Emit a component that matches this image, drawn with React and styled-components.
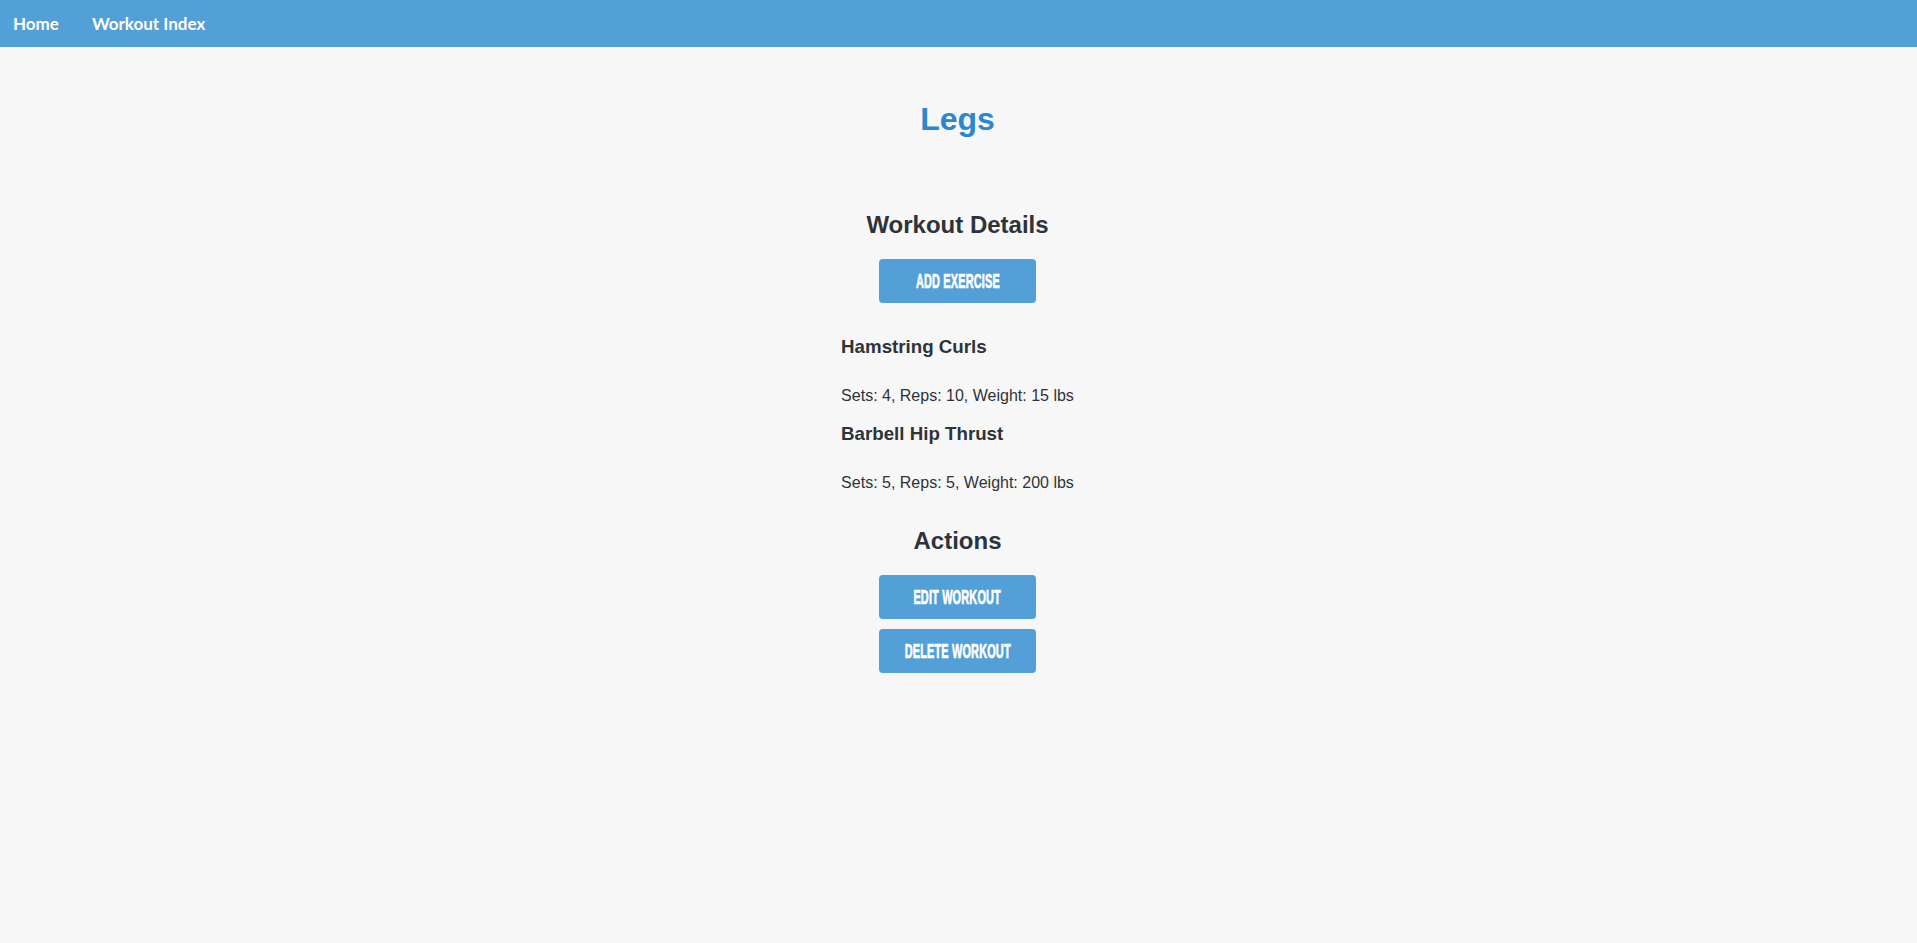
import React from 'react';
import styled, { createGlobalStyle } from 'styled-components';

const GlobalStyle = createGlobalStyle`
  html, body {
    margin: 0;
    padding: 0;
    background: #f7f7f7;
    font-family: "Liberation Sans", Arial, Helvetica, sans-serif;
    color: #2d3339;
  }
`;

const Page = styled.div`
  min-height: 100vh;
  background: #f7f7f7;
`;

const NavBar = styled.nav`
  height: 47px;
  background: #539fd7;
  display: flex;
  align-items: center;
  gap: 33px;
  padding-left: 13px;
`;

const NavLink = styled.a`
  font-family: Lato, "Liberation Sans", sans-serif;
  font-weight: 700;
  font-size: 17px;
  color: #ffffff;
  text-decoration: none;
  cursor: pointer;
`;

const Main = styled.main`
  display: flex;
  flex-direction: column;
  align-items: center;
  padding-right: 2px;
`;

const Title = styled.h1`
  margin: 54px 0 0;
  font-size: 32px;
  line-height: 36px;
  font-weight: 700;
  color: #2a87d1;
`;

const SectionTitle = styled.h2`
  margin: ${p => p.$top}px 0 0;
  font-size: 24px;
  line-height: 28px;
  font-weight: 700;
  color: #2d3339;
`;

const Button = styled.button`
  margin-top: ${p => p.$top}px;
  width: 157px;
  height: 44px;
  border: none;
  border-radius: 4px;
  background: #539fd7;
  color: #ffffff;
  display: flex;
  align-items: center;
  justify-content: center;
  padding: 0;
  cursor: pointer;
`;

const ButtonLabel = styled.span`
  display: inline-block;
  font-family: "Liberation Sans", Arial, sans-serif;
  font-weight: 700;
  font-size: 19.5px;
  line-height: 20px;
  letter-spacing: 0.3px;
  white-space: nowrap;
  transform: scaleX(0.56);
  -webkit-text-stroke: 0.7px #ffffff;
`;

const ExerciseList = styled.div`
  width: fit-content;
  margin-top: 33px;
`;

const ExerciseName = styled.h3`
  margin: 0 0 29px;
  font-size: 18.72px;
  line-height: 22px;
  font-weight: 700;
`;

const ExerciseInfo = styled.p`
  margin: 0 0 18px;
  font-size: 16px;
  line-height: 18px;
  white-space: nowrap;

  &:last-child {
    margin-bottom: 0;
  }
`;

const exercises = [
  { name: 'Hamstring Curls', sets: 4, reps: 10, weight: 15 },
  { name: 'Barbell Hip Thrust', sets: 5, reps: 5, weight: 200 },
];

const App = () => {
  return (
    <>
      <GlobalStyle />
      <Page>
        <NavBar>
          <NavLink>Home</NavLink>
          <NavLink>Workout Index</NavLink>
        </NavBar>
        <Main>
          <Title>Legs</Title>
          <SectionTitle $top={74}>Workout Details</SectionTitle>
          <Button $top={20}><ButtonLabel>ADD EXERCISE</ButtonLabel></Button>
          <ExerciseList>
            {exercises.map(ex => (
              <React.Fragment key={ex.name}>
                <ExerciseName>{ex.name}</ExerciseName>
                <ExerciseInfo>
                  Sets: {ex.sets}, Reps: {ex.reps}, Weight: {ex.weight} lbs
                </ExerciseInfo>
              </React.Fragment>
            ))}
          </ExerciseList>
          <SectionTitle $top={35}>Actions</SectionTitle>
          <Button $top={20}><ButtonLabel>EDIT WORKOUT</ButtonLabel></Button>
          <Button $top={10}><ButtonLabel>DELETE WORKOUT</ButtonLabel></Button>
        </Main>
      </Page>
    </>
  );
};

export default App;
